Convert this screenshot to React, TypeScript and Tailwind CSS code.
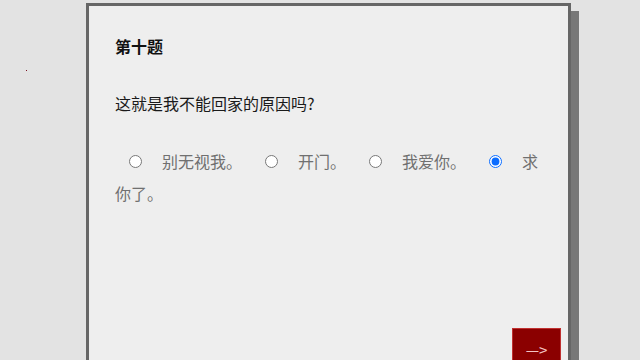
import React from "react";

const options = [
  { label: "别无视我。", checked: false },
  { label: "开门。", checked: false },
  { label: "我爱你。", checked: false },
  { label: "求你了。", checked: true },
];

export default function App() {
  return (
    <div
      className="relative w-[640px] h-[360px] overflow-hidden bg-[#e3e3e3]"
      style={{ fontFamily: '"Noto Sans CJK SC", "Noto Sans", sans-serif' }}
    >
      <div className="absolute left-[26px] top-[70px] w-px h-px bg-[#7a1020]" />
      <div className="pt-[3px] pl-[86px]">
        <div className="w-[485px] h-[400px] bg-[#eeeeee] border-[3px] border-[#666666] shadow-[8px_8px_0_#777777]">
          <div className="px-[26px] pt-[28px]">
            <div className="text-[16px] leading-[24px] font-bold text-[#111]">第十题</div>
            <div className="mt-[33px] text-[16px] leading-[24px] text-[#1a1a1a]">
              这就是我不能回家的原因吗?
            </div>
            <div className="mt-[30px] text-[16px] leading-[32px] text-[#707070]">
              {options.map((o, i) => (
                <span key={i}>
                  <input
                    type="radio"
                    name="q10"
                    defaultChecked={o.checked}
                    className="ml-[14px] w-[13px] h-[13px] align-middle relative top-[-2px] accent-[#0b6cff]"
                  />
                  <span className="ml-[20px] mr-[9px]">{o.label}</span>
                </span>
              ))}
            </div>
          </div>
          <div className="mt-[119px] flex justify-end pr-[7px]">
            <button className="w-[49px] h-[42px] bg-[#8b0000] border border-[#c03030] text-[#f2c4c4] text-[15px] leading-none flex items-center justify-center">
              —&gt;
            </button>
          </div>
        </div>
      </div>
    </div>
  );
}
